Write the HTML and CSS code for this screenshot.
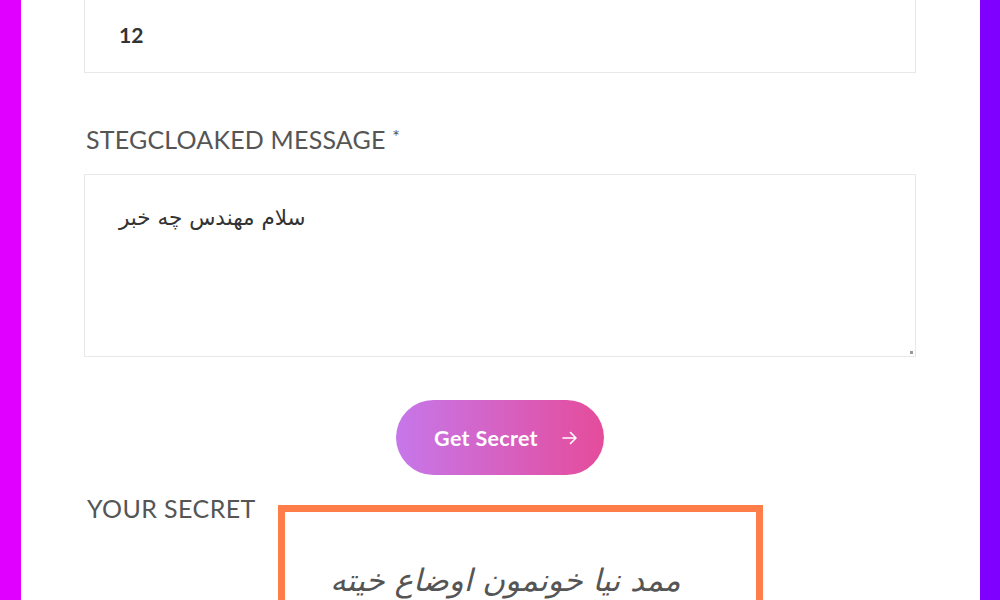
FILE: index.html
```html
<!DOCTYPE html>
<html lang="en">
<head>
<meta charset="utf-8">
<title>StegCloak</title>
<link rel="stylesheet" href="styles.css">
</head>
<body>
<main class="card">
  <div class="field first">
    <div class="input">12</div>
  </div>
  <div class="field">
    <label class="label">STEGCLOAKED MESSAGE <span class="req">*</span></label>
    <div class="textarea" dir="rtl">سلام مهندس چه خبر<span class="grip"></span></div>
  </div>
  <div class="actions">
    <button class="btn">Get Secret <svg class="arrow" width="16" height="14" viewBox="0 0 16 14"><path d="M1 7h13M8.5 1.5L14 7l-5.5 5.5" fill="none" stroke="#fff" stroke-width="1.6" stroke-linecap="round" stroke-linejoin="round"/></svg></button>
  </div>
  <div class="result">
    <div class="label result-label">YOUR SECRET</div>
    <div class="secret" dir="rtl">ممد نیا خونمون اوضاع خیته</div>
  </div>
</main>
</body>
</html>
```
FILE: styles.css
```css
html, body {
  margin: 0;
  height: 100%;
  overflow: hidden;
}
body {
  background: linear-gradient(to right, #e100ff, #7f00ff);
  font-family: "Lato", "Liberation Sans", sans-serif;
  color: #555;
}
.card {
  display: flow-root;
  background: #fff;
  margin: 0 20px 0 21px;
  height: 100%;
  padding: 0 64px 0 63px;
  box-sizing: border-box;
}
.field.first {
  margin-top: -8px;
}
.input {
  height: 81px;
  box-sizing: border-box;
  border: 1px solid #e8e8e8;
  padding: 29px 0 0 34px;
  font-size: 21px;
  font-weight: 700;
  color: #333;
  line-height: 26px;
}
.label {
  display: block;
  font-size: 25px;
  font-weight: 400;
  color: #555;
  padding-left: 2px;
  letter-spacing: 0.2px;
  white-space: nowrap;
}
.field .label {
  margin-top: 48px;
  line-height: 30px;
}
.req {
  font-size: 18px;
  vertical-align: 6px;
}
.textarea {
  position: relative;
  margin-top: 20px;
  height: 183px;
  box-sizing: border-box;
  border: 1px solid #e8e8e8;
  padding: 30px 0 0 34px;
  font-family: "DejaVu Sans", sans-serif;
  font-size: 21.5px;
  color: #333;
  display: flex;
  justify-content: flex-end;
}
.grip {
  position: absolute;
  right: 2px;
  bottom: 2px;
  width: 3px;
  height: 3px;
  background: #999;
}
.actions {
  display: flex;
  justify-content: center;
  margin-top: 43px;
}
.btn {
  width: 208px;
  height: 75px;
  border: none;
  border-radius: 38px;
  background: linear-gradient(to right, #c677ea, #e54c9b);
  color: #fff;
  font-family: "Lato", "Liberation Sans", sans-serif;
  font-weight: 700;
  font-size: 21.5px;
  letter-spacing: 0.3px;
  padding: 0 0 0 12px;
  display: flex;
  align-items: center;
  justify-content: center;
  gap: 24px;
}
.arrow {
  display: block;
  margin-top: 1px;
}
.result {
  display: flex;
  align-items: flex-start;
  margin-top: 19px;
  gap: 22px;
}
.result-label {
  flex: 0 0 168px;
  line-height: 28px;
  padding-left: 3px;
  box-sizing: border-box;
  letter-spacing: 0.4px;
}
.secret {
  flex: 0 0 485px;
  margin-top: 11px;
  height: 140px;
  box-sizing: border-box;
  border: 7px solid #ff7d48;
  padding: 50px 75px 0 0;
  font-family: "DejaVu Sans", sans-serif;
  font-style: italic;
  font-size: 31px;
  color: #555;
  text-align: right;
}
```
